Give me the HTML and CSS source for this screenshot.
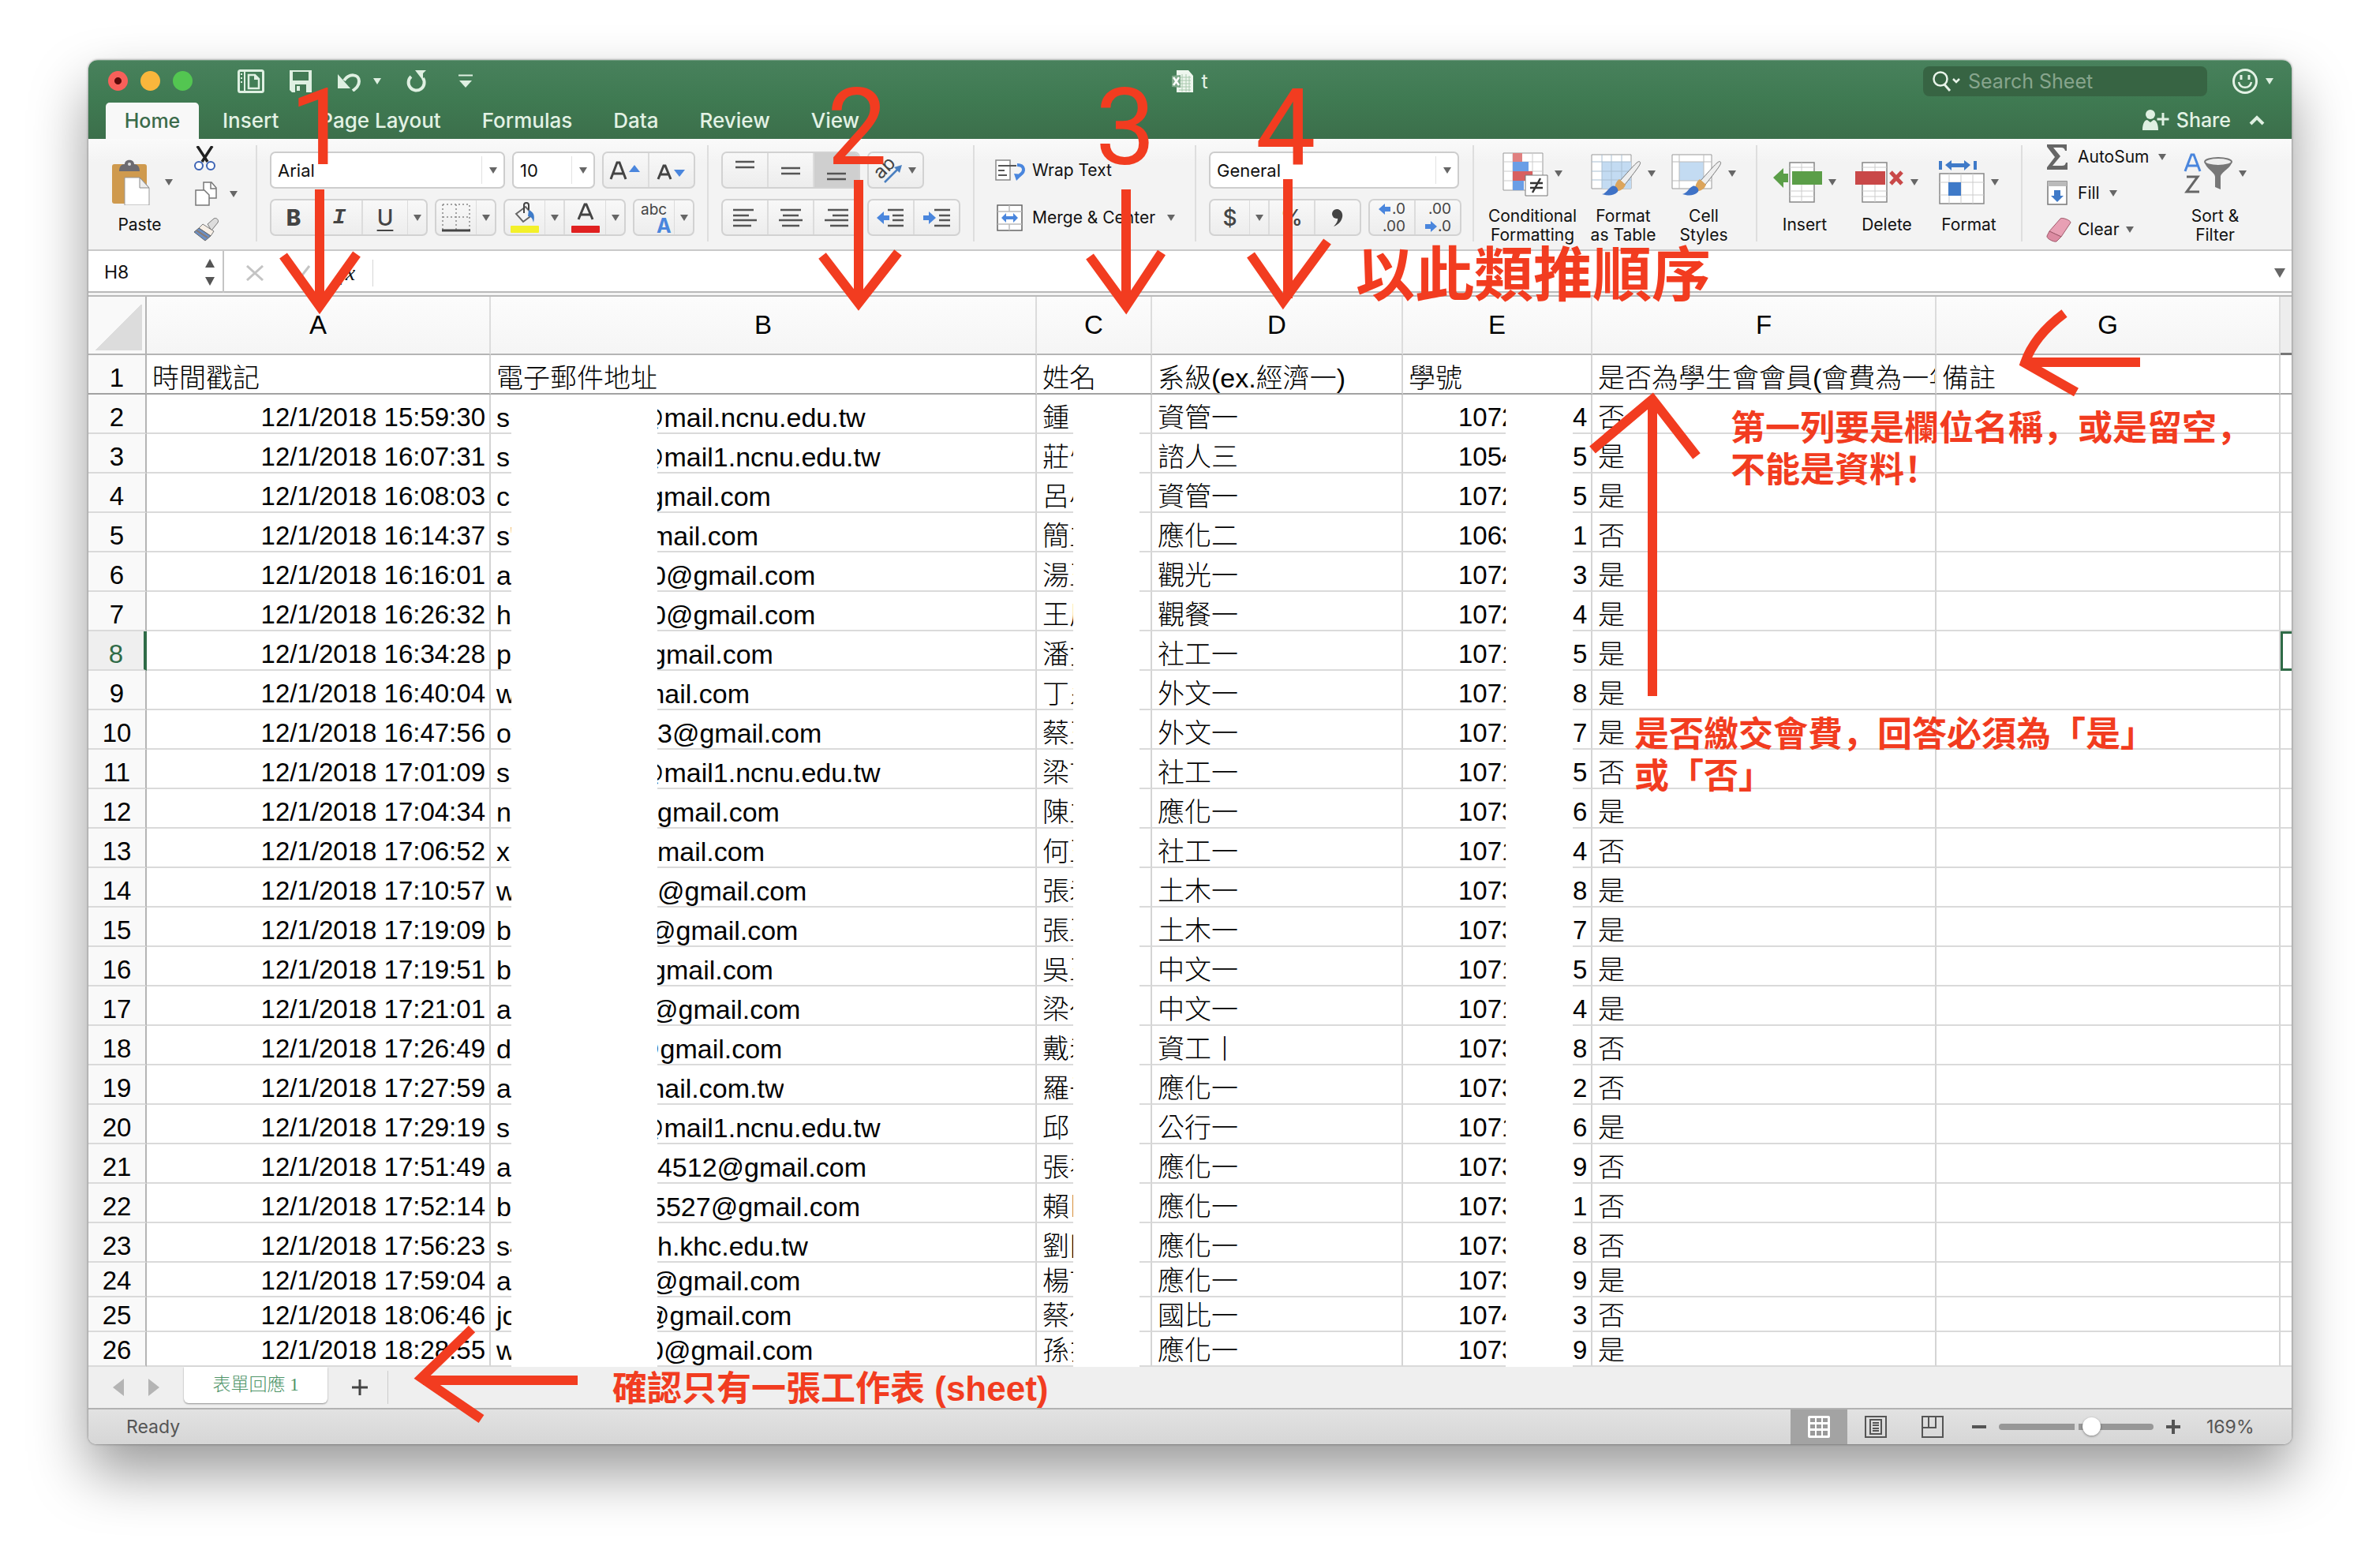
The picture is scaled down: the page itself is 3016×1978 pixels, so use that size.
FILE: index.html
```html
<!DOCTYPE html>
<html lang="zh-Hant">
<head>
<meta charset="utf-8">
<title>t</title>
<link rel="stylesheet" href="styles.css">
</head>
<body>
<main class="window">
  <header class="titlebar">
    <div class="title-row">
      <div class="lights">
        <button class="light light-close" aria-label="Close"></button>
        <button class="light light-min" aria-label="Minimize"></button>
        <button class="light light-max" aria-label="Zoom"></button>
      </div>
      <div class="quick">
        <button class="plain" aria-label="Gallery"><svg width="34" height="30" viewBox="0 0 34 30"><rect x="1.500" y="1.500" width="31" height="27" rx="2" fill="none" stroke="#dff0e2" stroke-width="3"/><path d="M9 2v26" stroke="#dff0e2" stroke-width="2"/><path d="M4 6h2M4 11h2M4 16h2" stroke="#dff0e2" stroke-width="2"/><path d="M14 7h8l5 5v12H14z" fill="none" stroke="#dff0e2" stroke-width="2.500"/><path d="M21 6v7h7z" fill="#dff0e2"/></svg></button>
        <button class="plain" aria-label="Save"><svg width="30" height="30" viewBox="0 0 30 30"><path d="M1 1h28v28H4l-3-3z" fill="#dff0e2"/><path d="M5 3h20v11H5z" fill="#437a55"/><path d="M8 19h14v10H8z" fill="#437a55"/><path d="M10 21h4v6h-4z" fill="#dff0e2"/></svg></button>
        <button class="plain undo" aria-label="Undo"><svg width="32" height="26" viewBox="0 0 32 26"><path d="M1 4v18h16z" fill="#dff0e2"/><path d="M9 12C15 3 28 3 28 13c0 6-4 9-8 12" fill="none" stroke="#dff0e2" stroke-width="4"/></svg><i class="caret caret-light"></i></button>
        <button class="plain" aria-label="Redo"><svg width="28" height="30" viewBox="0 0 28 30"><path d="M7 9a10 10 0 1 0 15 2" fill="none" stroke="#dff0e2" stroke-width="4"/><path d="M12 1h14l-4 4v9z" fill="#dff0e2"/></svg></button>
        <button class="plain" aria-label="Customize toolbar"><svg width="18" height="18" viewBox="0 0 18 18"><path d="M0 1.500h18" stroke="#dff0e2" stroke-width="2"/><path d="M1 8h16l-8 9z" fill="#dff0e2"/></svg></button>
      </div>
      <div class="doc"><svg width="27" height="30" viewBox="0 0 27 30"><path d="M6 1h15l6 7v21H6z" fill="#eef6ee"/><path d="M9 10h15M9 14h15M9 18h15M9 22h15M9 26h15M13 6v22M18 6v22M22 8v20" stroke="#a9c9ae" stroke-width="1"/><path d="M0 8l11-1v16L0 22z" fill="#7fa98a"/><path d="M2 10l7 10M9 10L2 20" stroke="#fff" stroke-width="2.500"/></svg><span>t</span></div>
      <div class="title-right">
        <label class="search"><svg width="36" height="32" viewBox="0 0 36 32"><circle cx="10" cy="13" r="8.500" fill="none" stroke="#e8f3e9" stroke-width="2.500"/><path d="M15 20l7 8" stroke="#e8f3e9" stroke-width="3"/><path d="M26 13l4 4 4-4" fill="none" stroke="#e8f3e9" stroke-width="2.500"/></svg><input type="search" placeholder="Search Sheet" aria-label="Search Sheet"></label>
        <button class="plain smile" aria-label="Feedback"><svg width="34" height="34" viewBox="0 0 34 34"><circle cx="17" cy="17" r="14.500" fill="none" stroke="#e3f2e5" stroke-width="3"/><path d="M12 9v6M22 9v6" stroke="#e3f2e5" stroke-width="3"/><path d="M9 18c2 9 14 9 16 0" fill="none" stroke="#e3f2e5" stroke-width="2.500"/></svg><i class="caret caret-light"></i></button>
      </div>
    </div>
    <nav class="tabs">
      <button class="tab tab-on">Home</button>
      <button class="tab">Insert</button>
      <button class="tab">Page Layout</button>
      <button class="tab">Formulas</button>
      <button class="tab">Data</button>
      <button class="tab">Review</button>
      <button class="tab">View</button>
      <button class="share"><svg width="34" height="26" viewBox="0 0 34 26"><circle cx="10" cy="6" r="6" fill="#dff0e2"/><path d="M0 26c0-9 3-13 6-13l4 3 4-3c3 0 6 4 6 13z" fill="#dff0e2"/><path d="M26 4v16M18.500 12h15" stroke="#dff0e2" stroke-width="3"/></svg>Share</button>
      <button class="plain collapse" aria-label="Collapse ribbon"><svg width="20" height="14" viewBox="0 0 20 14"><path d="M2 12l8-8 8 8" fill="none" stroke="#dff0e2" stroke-width="4"/></svg></button>
    </nav>
  </header>

  <section class="ribbon">
    <div class="group clip">
      <button class="big paste"><span class="pic"><svg width="48" height="58" viewBox="0 0 48 58"><rect x="0" y="6" width="44" height="50" rx="3" fill="#cf9a4e"/><path d="M9 15c0-6 3-9 7-9 0-7 12-7 12 0 4 0 7 3 7 9z" fill="#6c6a70"/><circle cx="22" cy="6" r="2" fill="#ddd"/><path d="M16 23h19l12 13v22H16z" fill="#fff" stroke="#999"/><path d="M35 23v13h12z" fill="#eee" stroke="#888"/></svg><i class="caret"></i></span>Paste</button>
      <div class="stack">
        <button class="plain" aria-label="Cut"><svg width="30" height="31" viewBox="0 0 30 31"><path d="M5 0l13 20M24 0L11 20" stroke="#222" stroke-width="3.500"/><circle cx="7" cy="25" r="5" fill="#fff" stroke="#3c63b4" stroke-width="2"/><circle cx="22" cy="25" r="5" fill="#fff" stroke="#3c63b4" stroke-width="2"/></svg></button>
        <button class="plain copy" aria-label="Copy"><svg width="28" height="31" viewBox="0 0 28 31"><path d="M11 1h10l6 7v13H11z" fill="#fff" stroke="#777" stroke-width="1.500"/><path d="M20 1v8h7" fill="none" stroke="#777" stroke-width="1.500"/><path d="M1 11h11l6 6v13H1z" fill="#fff" stroke="#777" stroke-width="1.500"/></svg><i class="caret"></i></button>
        <button class="plain" aria-label="Format painter"><svg width="34" height="30" viewBox="0 0 34 30"><path d="M18 8l8-7c3-2 7 2 5 5l-8 10z" fill="#ddd" stroke="#777"/><path d="M12 8l14 9-4 6L7 13z" fill="#f7efe6" stroke="#777"/><path d="M7 13l15 10-7 6L1 18z" fill="#6b8fc4" stroke="#666"/><path d="M4 16l14 9" stroke="#8a7a70" stroke-width="2"/></svg></button>
      </div>
    </div>

    <div class="group controls font">
      <div class="line">
        <div class="combo w-font"><select aria-label="Font"><option>Arial</option></select><i class="caret"></i></div>
        <div class="combo w-size"><select aria-label="Font size"><option>10</option></select><i class="caret"></i></div>
        <div class="seg"><button class="cell" aria-label="Increase font size"><svg width="42" height="26" viewBox="0 0 42 26"><path d="M2 24L10 3h3l8 21M5 17h13" fill="none" stroke="#444" stroke-width="3"/><path d="M25 15h14l-7-9z" fill="#4a86dd"/></svg></button><button class="cell" aria-label="Decrease font size"><svg width="42" height="26" viewBox="0 0 42 26"><path d="M4 24l7-17h2l7 17M7 18h10" fill="none" stroke="#444" stroke-width="3"/><path d="M24 12h14l-7 9z" fill="#4a86dd"/></svg></button></div>
      </div>
      <div class="line">
        <div class="seg"><button class="cell ico bold">B</button><button class="cell ico ital">I</button><button class="cell ico under">U</button><button class="drop" aria-label="Underline options"><i class="caret"></i></button></div>
        <div class="seg"><button class="cell narrow" aria-label="Borders"><svg width="36" height="36" viewBox="0 0 36 36"><path d="M1 1h34v32M1 1v32M18 1v32M1 17h34" fill="none" stroke="#888" stroke-width="1.500" stroke-dasharray="2 3"/><path d="M0 34h36" stroke="#444" stroke-width="3"/></svg></button><button class="drop" aria-label="Border options"><i class="caret"></i></button></div>
        <div class="seg"><button class="cell narrow" aria-label="Fill color"><svg width="38" height="40" viewBox="0 0 38 40"><path d="M8 15l12-9 9 10-12 9z" fill="#f4f4f4" stroke="#666" stroke-width="2"/><path d="M18 14V4c0-4 6-4 6 0v6" fill="none" stroke="#444" stroke-width="2"/><path d="M24 10c7 3 8 8 6 16-1-5-3-8-7-8z" fill="#3e7bc9"/><rect x="1" y="30" width="36" height="9" rx="1" fill="#f3f02a"/></svg></button><button class="drop" aria-label="Fill options"><i class="caret"></i></button><button class="cell narrow" aria-label="Font color"><svg width="38" height="40" viewBox="0 0 38 40"><path d="M10 22L18 3h2l8 19M13 16h12" fill="none" stroke="#444" stroke-width="3"/><rect x="1" y="30" width="36" height="9" rx="1" fill="#e02020"/></svg></button><button class="drop" aria-label="Font color options"><i class="caret"></i></button></div>
        <div class="seg"><button class="cell narrow abc" aria-label="Phonetic guide"><span>abc</span><b>A</b></button><button class="drop" aria-label="Phonetic options"><i class="caret"></i></button></div>
      </div>
    </div>

    <div class="group controls align">
      <div class="line">
        <div class="seg"><button class="cell" aria-label="Align top"><svg width="30" height="30" viewBox="0 0 30 30"><path d="M3 4h24M3 11h24" stroke="#555" stroke-width="2.500"/></svg></button><button class="cell" aria-label="Align middle"><svg width="30" height="30" viewBox="0 0 30 30"><path d="M3 12h24M3 19h24" stroke="#555" stroke-width="2.500"/></svg></button><button class="cell pressed" aria-label="Align bottom"><svg width="30" height="30" viewBox="0 0 30 30"><path d="M3 19h24M3 26h24" stroke="#555" stroke-width="2.500"/></svg></button></div>
        <div class="seg"><button class="cell orient" aria-label="Orientation"><svg width="36" height="34" viewBox="0 0 36 34"><text x="4" y="27" transform="rotate(-45 8 24)" class="svg-ab">ab</text><path d="M12 32L31 13" stroke="#4a7fc0" stroke-width="2.500"/><path d="M34 10l-3 10-7-7z" fill="#4a7fc0"/></svg><i class="caret"></i></button></div>
      </div>
      <div class="line">
        <div class="seg"><button class="cell" aria-label="Align left"><svg width="30" height="24" viewBox="0 0 30 24"><path d="M0 2h26M0 9h20M0 15h30M0 22h23" stroke="#555" stroke-width="2.500"/></svg></button><button class="cell" aria-label="Center"><svg width="30" height="24" viewBox="0 0 30 24"><path d="M2 2h26M5 9h20M0 15h30M4 22h22" stroke="#555" stroke-width="2.500"/></svg></button><button class="cell" aria-label="Align right"><svg width="30" height="24" viewBox="0 0 30 24"><path d="M4 2h26M10 9h20M0 15h30M7 22h23" stroke="#555" stroke-width="2.500"/></svg></button></div>
        <div class="seg"><button class="cell" aria-label="Decrease indent"><svg width="36" height="24" viewBox="0 0 36 24"><path d="M14 2h20M20 9h14M20 15h14M14 22h20" stroke="#555" stroke-width="2.500"/><path d="M0 12l9-8v5h7v6H9v5z" fill="#4a86dd"/></svg></button><button class="cell" aria-label="Increase indent"><svg width="36" height="24" viewBox="0 0 36 24"><path d="M15 2h20M21 9h14M21 15h14M15 22h20" stroke="#555" stroke-width="2.500"/><path d="M17 12L8 4v5H1v6h7v5z" fill="#4a86dd"/></svg></button></div>
      </div>
    </div>

    <div class="group controls wrap">
      <button class="text-btn"><svg width="40" height="28" viewBox="0 0 40 28"><path d="M1 1h18v25H1z" fill="#fff" stroke="#888" stroke-width="1.500"/><path d="M4 8h23M4 14h8M4 20h11" stroke="#555" stroke-width="2"/><path d="M28 7c9 0 11 8 3 13" fill="none" stroke="#4a86dd" stroke-width="4"/><path d="M24 18l11 1-8 8z" fill="#4a86dd"/></svg>Wrap Text</button>
      <button class="text-btn"><svg width="40" height="34" viewBox="0 0 40 34"><path d="M3 1h31v32H3z" fill="#fff" stroke="#666" stroke-width="1.500"/><path d="M3 9h31M3 25h31M18 1v8M18 25v8" stroke="#bbb" stroke-width="1.500"/><path d="M8 17l6-6v4h9v-4l6 6-6 6v-4h-9v4z" fill="#4a86dd"/></svg>Merge &amp; Center<i class="caret"></i></button>
    </div>

    <div class="group controls number">
      <div class="line"><div class="combo w-num"><select aria-label="Number format"><option>General</option></select><i class="caret"></i></div></div>
      <div class="line">
        <div class="seg"><button class="cell ico slim">$</button><button class="drop" aria-label="Currency options"><i class="caret"></i></button><button class="cell ico">%</button><button class="cell" aria-label="Comma style"><svg width="18" height="26" viewBox="0 0 18 26"><circle cx="8" cy="8" r="6" fill="#444"/><path d="M8 2c12 2 8 18-4 22 6-6 6-10 4-14z" fill="#444"/></svg></button></div>
        <div class="seg"><button class="cell dec" aria-label="Increase decimal"><span><svg width="16" height="14" viewBox="0 0 16 14"><path d="M0 7l8-7v4h7v6H8v4z" fill="#4a86dd"/></svg>.0</span><span>.00</span></button><button class="cell dec" aria-label="Decrease decimal"><span>.00</span><span><svg width="16" height="14" viewBox="0 0 16 14"><path d="M16 7L8 0v4H1v6h7v4z" fill="#4a86dd"/></svg>.0</span></button></div>
      </div>
    </div>

    <div class="group bigs styles">
      <button class="big w-cond"><span class="pic"><svg width="58" height="58" viewBox="0 0 58 58"><path d="M1 3h50v47H1z" fill="#fff" stroke="#999"/><path d="M13 3v47M38 3v47M1 14h50M1 26h50M1 38h50" stroke="#ccc"/><path d="M13 3h12v11H13z" fill="#e08080"/><path d="M13 14h20v12H13z" fill="#6a9ee6"/><path d="M13 26h25v12H13z" fill="#d86060"/><path d="M13 38h14v12H13z" fill="#6a9ee6"/><path d="M29 31h28v26H29z" fill="#fff" stroke="#777"/><path d="M35 41h16M35 47h16M48 35L38 53" stroke="#333" stroke-width="2.500"/></svg><i class="caret"></i></span>Conditional<br>Formatting</button>
      <button class="big w-fmt"><span class="pic"><svg width="64" height="58" viewBox="0 0 64 58"><path d="M1 5h50v43H1z" fill="#fff" stroke="#999"/><path d="M14 14h37v34H14z" fill="#c3dbf2"/><path d="M14 5v43M26 5v43M39 5v43M1 14h50M1 26h50M1 37h50" stroke="#a9bfd2"/><path d="M62 14c2 2 0 5-19 29l-6-5C55 18 60 12 62 14z" fill="#eee" stroke="#777"/><path d="M36 36l8 7c-2 6-8 9-14 8 0-8 2-12 6-15z" fill="#dca55c"/><path d="M27 45c3-2 9 3 7 7-6 6-14 5-20 3 6-1 8-8 13-10z" fill="#3f72c6"/></svg><i class="caret"></i></span>Format<br>as Table</button>
      <button class="big w-cell"><span class="pic"><svg width="64" height="58" viewBox="0 0 64 58"><path d="M1 5h50v43H1z" fill="#fff" stroke="#999"/><path d="M10 14h31v24H10z" fill="#c3dbf2"/><path d="M10 5v43M41 5v43M1 14h50M1 38h50" stroke="#bbb"/><path d="M62 14c2 2 0 5-19 29l-6-5C55 18 60 12 62 14z" fill="#eee" stroke="#777"/><path d="M36 36l8 7c-2 6-8 9-14 8 0-8 2-12 6-15z" fill="#dca55c"/><path d="M27 45c3-2 9 3 7 7-6 6-14 5-20 3 6-1 8-8 13-10z" fill="#3f72c6"/></svg><i class="caret"></i></span>Cell<br>Styles</button>
    </div>

    <div class="group bigs cells">
      <button class="big w-cell"><span class="pic"><svg width="62" height="54" viewBox="0 0 62 54"><path d="M21 2h31v50H21z" fill="#fff" stroke="#888" stroke-width="1.500"/><path d="M36 2v50M21 8h31M21 38h31M21 45h31" stroke="#ccc"/><path d="M24 13h38v17H24z" fill="#5b9e48"/><path d="M0 21L13 9v7h6v11h-6v7z" fill="#5b9e48"/></svg><i class="caret"></i></span>Insert</button>
      <button class="big w-cell"><span class="pic"><svg width="62" height="54" viewBox="0 0 62 54"><path d="M9 2h31v50H9z" fill="#fff" stroke="#888" stroke-width="1.500"/><path d="M25 2v50M9 8h31M9 38h31M9 45h31" stroke="#ccc"/><path d="M0 13h38v17H0z" fill="#c94848"/><path d="M45 14l14 15M59 14L45 29" stroke="#c94848" stroke-width="5"/></svg><i class="caret"></i></span>Delete</button>
      <button class="big w-cell"><span class="pic"><svg width="58" height="58" viewBox="0 0 58 58"><path d="M1 18h56v38H1z" fill="#fff" stroke="#888" stroke-width="1.500"/><path d="M13 18v38M28 18v38M43 18v38M1 29h56M1 45h56" stroke="#ccc"/><path d="M12 29h16v17H12z" fill="#3f7ac8"/><path d="M2 2v11M46 2v11" stroke="#3f7ac8" stroke-width="4"/><path d="M8 7l8-6v4h16V1l8 6-8 7v-4H16v4z" fill="#3f7ac8"/></svg><i class="caret"></i></span>Format</button>
    </div>

    <div class="group edit">
      <div class="stack wide">
        <button class="text-btn"><svg width="28" height="32" viewBox="0 0 28 32"><path d="M1 0h25v8h-2c-1-3-2-4-5-4H9l9 11L8 27h12c3 0 4-1 5-4h2v9H1v-3l10-13L1 3z" fill="#666"/></svg>AutoSum<i class="caret"></i></button>
        <button class="text-btn"><svg width="28" height="32" viewBox="0 0 28 32"><path d="M2 1h24v29H2z" fill="#fff" stroke="#777" stroke-width="1.500"/><path d="M2 1h24v6H2z" fill="#bbb"/><path d="M10 12h8v7h4l-8 8-8-8h4z" fill="#3f7ac8"/></svg>Fill<i class="caret"></i></button>
        <button class="text-btn"><svg width="32" height="32" viewBox="0 0 32 32"><path d="M18 2c2-2 13 2 13 5L19 25 4 18z" fill="#e8a0b4" stroke="#a05a6c"/><path d="M4 18l15 7-6 6C9 32 0 27 1 24z" fill="#dc8ba2" stroke="#a05a6c"/></svg>Clear<i class="caret"></i></button>
      </div>
      <button class="big w-cell"><span class="pic"><svg width="62" height="52" viewBox="0 0 62 52"><path d="M2 23L10 2h3l8 21M5 16h13" fill="none" stroke="#4a86dd" stroke-width="3"/><path d="M4 30h14L4 49h16" fill="none" stroke="#666" stroke-width="3"/><path d="M27 11c0 8 13 13 13 19v13l7 3V30c0-6 14-11 14-19z" fill="#777"/><ellipse cx="44" cy="11" rx="17" ry="5" fill="#eee" stroke="#777" stroke-width="2"/></svg><i class="caret"></i></span>Sort &amp;<br>Filter</button>
    </div>
  </section>

  <section class="formula">
    <label class="namebox"><input value="H8" aria-label="Name box"><svg width="14" height="34" viewBox="0 0 14 34"><path d="M1 11h12L7 0zM1 23h12L7 34z" fill="#555"/></svg></label>
    <button class="plain" aria-label="Cancel"><svg width="22" height="20" viewBox="0 0 22 20"><path d="M1 1l20 18M21 1L1 19" stroke="#c4c4c4" stroke-width="3"/></svg></button>
    <button class="plain" aria-label="Enter"><svg width="24" height="22" viewBox="0 0 24 22"><path d="M2 13l6 7L22 2" fill="none" stroke="#c4c4c4" stroke-width="3"/></svg></button>
    <button class="plain fx">fx</button>
    <input class="fx-input" aria-label="Formula">
    <button class="plain" aria-label="Expand formula bar"><i class="caret caret-big"></i></button>
  </section>

  <table class="sheet">
    <colgroup><col class="c-n"><col class="c-w"><col class="c-b"><col class="c-c"><col class="c-d"><col class="c-e"><col class="c-w"><col class="c-w"><col></colgroup>
    <thead><tr><th class="corner"></th><th>A</th><th>B</th><th>C</th><th>D</th><th>E</th><th>F</th><th>G</th><th class="col-on"></th></tr></thead>
    <tbody>
      <tr class="heads"><th>1</th><td>時間戳記</td><td>電子郵件地址</td><td>姓名</td><td>系級(ex.經濟一)</td><td>學號</td><td>是否為學生會會員(會費為一年)</td><td>備註</td><td></td></tr>
      <tr><th>2</th><td>12/1/2018 15:59:30</td><td><div><span>s</span><i></i><span class="k4">@mail.ncnu.edu.tw</span></div></td><td><div><span>鍾</span><i></i></div></td><td>資管一</td><td><div><span>1072</span><i></i><span>4</span></div></td><td>否</td><td></td><td></td></tr>
      <tr><th>3</th><td>12/1/2018 16:07:31</td><td><div><span>s</span><i></i><span class="k4">@mail1.ncnu.edu.tw</span></div></td><td><div><span>莊忄</span><i></i></div></td><td>諮人三</td><td><div><span>1054</span><i></i><span>5</span></div></td><td>是</td><td></td><td></td></tr>
      <tr><th>4</th><td>12/1/2018 16:08:03</td><td><div><span>c</span><i></i><span class="k2">gmail.com</span></div></td><td><div><span>呂小</span><i></i></div></td><td>資管一</td><td><div><span>1072</span><i></i><span>5</span></div></td><td>是</td><td></td><td></td></tr>
      <tr><th>5</th><td>12/1/2018 16:14:37</td><td><div><span>s'</span><i></i><span class="k1">mail.com</span></div></td><td><div><span>簡立</span><i></i></div></td><td>應化二</td><td><div><span>1063</span><i></i><span>1</span></div></td><td>否</td><td></td><td></td></tr>
      <tr><th>6</th><td>12/1/2018 16:16:01</td><td><div><span>a</span><i></i><span class="k1">0@gmail.com</span></div></td><td><div><span>湯王</span><i></i></div></td><td>觀光一</td><td><div><span>1072</span><i></i><span>3</span></div></td><td>是</td><td></td><td></td></tr>
      <tr><th>7</th><td>12/1/2018 16:26:32</td><td><div><span>h.</span><i></i><span class="k1">0@gmail.com</span></div></td><td><div><span>王厂</span><i></i></div></td><td>觀餐一</td><td><div><span>1072</span><i></i><span>4</span></div></td><td>是</td><td></td><td></td></tr>
      <tr class="row-on"><th>8</th><td>12/1/2018 16:34:28</td><td><div><span>pa</span><i></i><span class="k1">gmail.com</span></div></td><td><div><span>潘女</span><i></i></div></td><td>社工一</td><td><div><span>1071</span><i></i><span>5</span></div></td><td>是</td><td></td><td class="picked"></td></tr>
      <tr><th>9</th><td>12/1/2018 16:40:04</td><td><div><span>w</span><i></i><span class="k3">mail.com</span></div></td><td><div><span>丁糸</span><i></i></div></td><td>外文一</td><td><div><span>1071</span><i></i><span>8</span></div></td><td>是</td><td></td><td></td></tr>
      <tr><th>10</th><td>12/1/2018 16:47:56</td><td><div><span>ov</span><i></i><span>3@gmail.com</span></div></td><td><div><span>蔡王</span><i></i></div></td><td>外文一</td><td><div><span>1071</span><i></i><span>7</span></div></td><td>是</td><td></td><td></td></tr>
      <tr><th>11</th><td>12/1/2018 17:01:09</td><td><div><span>s</span><i></i><span class="k4">@mail1.ncnu.edu.tw</span></div></td><td><div><span>梁言</span><i></i></div></td><td>社工一</td><td><div><span>1071</span><i></i><span>5</span></div></td><td>否</td><td></td><td></td></tr>
      <tr><th>12</th><td>12/1/2018 17:04:34</td><td><div><span>n</span><i></i><span>gmail.com</span></div></td><td><div><span>陳立</span><i></i></div></td><td>應化一</td><td><div><span>1073</span><i></i><span>6</span></div></td><td>是</td><td></td><td></td></tr>
      <tr><th>13</th><td>12/1/2018 17:06:52</td><td><div><span>x</span><i></i><span>mail.com</span></div></td><td><div><span>何王</span><i></i></div></td><td>社工一</td><td><div><span>1071</span><i></i><span>4</span></div></td><td>否</td><td></td><td></td></tr>
      <tr><th>14</th><td>12/1/2018 17:10:57</td><td><div><span>w</span><i></i><span>@gmail.com</span></div></td><td><div><span>張禾</span><i></i></div></td><td>土木一</td><td><div><span>1073</span><i></i><span>8</span></div></td><td>是</td><td></td><td></td></tr>
      <tr><th>15</th><td>12/1/2018 17:19:09</td><td><div><span>b</span><i></i><span class="k2">@gmail.com</span></div></td><td><div><span>張王</span><i></i></div></td><td>土木一</td><td><div><span>1073</span><i></i><span>7</span></div></td><td>是</td><td></td><td></td></tr>
      <tr><th>16</th><td>12/1/2018 17:19:51</td><td><div><span>ba</span><i></i><span class="k1">gmail.com</span></div></td><td><div><span>吳王</span><i></i></div></td><td>中文一</td><td><div><span>1071</span><i></i><span>5</span></div></td><td>是</td><td></td><td></td></tr>
      <tr><th>17</th><td>12/1/2018 17:21:01</td><td><div><span>au</span><i></i><span class="k1">@gmail.com</span></div></td><td><div><span>梁亻</span><i></i></div></td><td>中文一</td><td><div><span>1071</span><i></i><span>4</span></div></td><td>是</td><td></td><td></td></tr>
      <tr><th>18</th><td>12/1/2018 17:26:49</td><td><div><span>de</span><i></i><span class="k5">@gmail.com</span></div></td><td><div><span>戴禾</span><i></i></div></td><td>資工丨</td><td><div><span>1073</span><i></i><span>8</span></div></td><td>否</td><td></td><td></td></tr>
      <tr><th>19</th><td>12/1/2018 17:27:59</td><td><div><span>a</span><i></i><span class="k3">mail.com.tw</span></div></td><td><div><span>羅子</span><i></i></div></td><td>應化一</td><td><div><span>1073</span><i></i><span>2</span></div></td><td>否</td><td></td><td></td></tr>
      <tr><th>20</th><td>12/1/2018 17:29:19</td><td><div><span>s</span><i></i><span class="k4">@mail1.ncnu.edu.tw</span></div></td><td><div><span>邱日</span><i></i></div></td><td>公行一</td><td><div><span>1071</span><i></i><span>6</span></div></td><td>是</td><td></td><td></td></tr>
      <tr><th>21</th><td>12/1/2018 17:51:49</td><td><div><span>as</span><i></i><span class="k3">04512@gmail.com</span></div></td><td><div><span>張衤</span><i></i></div></td><td>應化一</td><td><div><span>1073</span><i></i><span>9</span></div></td><td>否</td><td></td><td></td></tr>
      <tr><th>22</th><td>12/1/2018 17:52:14</td><td><div><span>be</span><i></i><span class="k1">5527@gmail.com</span></div></td><td><div><span>賴臣</span><i></i></div></td><td>應化一</td><td><div><span>1073</span><i></i><span>1</span></div></td><td>否</td><td></td><td></td></tr>
      <tr><th>23</th><td>12/1/2018 17:56:23</td><td><div><span>s4</span><i></i><span>h.khc.edu.tw</span></div></td><td><div><span>劉冂</span><i></i></div></td><td>應化一</td><td><div><span>1073</span><i></i><span>8</span></div></td><td>否</td><td></td><td></td></tr>
      <tr class="short"><th>24</th><td>12/1/2018 17:59:04</td><td><div><span>as</span><i></i><span class="k1">@gmail.com</span></div></td><td><div><span>楊言</span><i></i></div></td><td>應化一</td><td><div><span>1073</span><i></i><span>9</span></div></td><td>是</td><td></td><td></td></tr>
      <tr class="short"><th>25</th><td>12/1/2018 18:06:46</td><td><div><span>jo</span><i></i><span class="k3">@gmail.com</span></div></td><td><div><span>蔡亻</span><i></i></div></td><td>國比一</td><td><div><span>1074</span><i></i><span>3</span></div></td><td>否</td><td></td><td></td></tr>
      <tr class="short"><th>26</th><td>12/1/2018 18:28:55</td><td><div><span>w</span><i></i><span class="k2">0@gmail.com</span></div></td><td><div><span>孫扌</span><i></i></div></td><td>應化一</td><td><div><span>1073</span><i></i><span>9</span></div></td><td>是</td><td></td><td></td></tr>
    </tbody>
  </table>

  <nav class="sheets">
    <button class="plain" aria-label="Previous sheet"><svg width="14" height="22" viewBox="0 0 14 22"><path d="M14 0v22L0 11z" fill="#b4b4b4"/></svg></button>
    <button class="plain" aria-label="Next sheet"><svg width="14" height="22" viewBox="0 0 14 22"><path d="M0 0v22l14-11z" fill="#b4b4b4"/></svg></button>
    <button class="sheet-tab">表單回應 1</button>
    <button class="plain add" aria-label="Add sheet"><svg width="20" height="20" viewBox="0 0 20 20"><path d="M10 0v20M0 10h20" stroke="#444" stroke-width="3"/></svg></button>
  </nav>

  <footer class="status">
    <span class="ready">Ready</span>
    <button class="view view-on" aria-label="Normal view"><svg width="28" height="28" viewBox="0 0 28 28"><rect width="28" height="28" rx="2" fill="#fff"/><path d="M3 3h6v5H3zM11 3h6v5h-6zM19 3h6v5h-6zM3 11h6v5H3zM11 11h6v5h-6zM19 11h6v5h-6zM3 19h6v6H3zM11 19h6v6h-6zM19 19h6v6h-6z" fill="#999"/></svg></button>
    <button class="view" aria-label="Page layout view"><svg width="28" height="28" viewBox="0 0 28 28"><path d="M1 1h26v26H1zM7 5h14v18H7zM10 9h8M10 12h8M10 16h8M10 19h8" fill="none" stroke="#555" stroke-width="2"/></svg></button>
    <button class="view" aria-label="Page break view"><svg width="28" height="28" viewBox="0 0 28 28"><path d="M1 1h26v26H1zM9 1v14M18 1v14H1" fill="none" stroke="#555" stroke-width="2"/></svg></button>
    <button class="plain zoom-out" aria-label="Zoom out"><svg width="18" height="18" viewBox="0 0 18 18"><path d="M0 9h18" stroke="#555" stroke-width="4"/></svg></button>
    <input class="zoom" type="range" min="0" max="100" value="61" aria-label="Zoom">
    <button class="plain" aria-label="Zoom in"><svg width="18" height="18" viewBox="0 0 18 18"><path d="M9 0v18M0 9h18" stroke="#555" stroke-width="4"/></svg></button>
    <span class="percent">169%</span>
  </footer>
</main>

<aside class="notes">
  <svg class="arrows" viewBox="0 0 3016 1978" width="3016" height="1978">
    <path d="M405 240V390M359 324L405 388L452 322"/>
    <path d="M1088 228V382M1042 324L1088 384L1138 320"/>
    <path d="M1427 240V390M1381 325L1427 388L1472 320"/>
    <path d="M1632 227V378M1585 323L1626 382L1682 306"/>
    <path d="M2712 459H2568M2616 397C2592 415 2574 436 2566 460L2631 497"/>
    <path d="M2094 882V508M2018 570L2094 506L2150 578"/>
    <path d="M732 1749H536M598 1684L534 1746L610 1798"/>
  </svg>
  <span class="note digit d1">1</span>
  <span class="note digit d2">2</span>
  <span class="note digit d3">3</span>
  <span class="note digit d4">4</span>
  <p class="note order">以此類推順序</p>
  <p class="note first-row" lang="zh-Hans">第一列要是欄位名稱，或是留空，<br>不能是資料！</p>
  <p class="note paid" lang="zh-Hans">是否繳交會費，回答必須為「是」<br>或「否」</p>
  <p class="note one-sheet">確認只有一張工作表 (sheet)</p>
</aside>
</body>
</html>
```
FILE: styles.css
```css
* { box-sizing: border-box; }

body {
  margin: 0;
  position: relative;
  padding: 76px 112px 148px;
  background: #fff;
  color: #111;
  font-family: Inter, "Noto Sans CJK TC", sans-serif;
  font-size: 21px;
  line-height: 24px;
}

button, input, select {
  font: inherit;
  color: inherit;
  margin: 0;
  padding: 0;
  border: 0;
  background: none;
  appearance: none;
  outline: 0;
  border-radius: 0;
}

svg { display: block; flex: none; }

.window {
  border-radius: 12px 12px 10px 10px;
  box-shadow: 0 36px 72px rgba(0, 0, 0, .4), 0 0 3px rgba(0, 0, 0, .5);
  overflow: hidden;
  background: #fff;
}

.plain { display: flex; align-items: center; }

.caret {
  flex: none;
  border: 5px solid transparent;
  border-top: 8px solid #666;
  border-bottom: 0;
}
.caret-light { border-top-color: #dff0e2; }
.caret-big { border-width: 12px 7px 0; }

/* title bar */
.titlebar {
  background: linear-gradient(#48815c, #3f7a52 50%, #3c6f4b);
  color: #e3f2e5;
  border-top: 1px solid #6d9a7c;
}
.title-row {
  height: 51px;
  display: grid;
  grid-template-columns: 1fr auto 1fr;
  align-items: center;
  position: relative;
}
.lights {
  display: flex;
  gap: 16px;
  padding-left: 25px;
  grid-area: 1 / 1;
}
.light { width: 25px; height: 25px; border-radius: 50%; }
.light-close { background: radial-gradient(#5c0a0a 4px, #f8605a 5px); }
.light-min { background: #f9b63c; }
.light-max { background: #53c651; }
.quick {
  grid-area: 1 / 1;
  display: flex;
  align-items: center;
  gap: 31px;
  padding-left: 189px;
}
.undo { gap: 14px; }
.quick .plain:nth-child(4) { margin-right: 8px; }
.doc { display: flex; align-items: center; gap: 10px; font-size: 25px; }
.title-right {
  display: flex;
  align-items: center;
  justify-content: flex-end;
  gap: 31px;
  padding-right: 23px;
}
.search {
  display: flex;
  align-items: center;
  gap: 9px;
  width: 360px;
  height: 38px;
  padding-left: 12px;
  border-radius: 8px;
  background: #376443;
}
.search input { flex: 1; min-width: 0; font-size: 25px; }
.search input::placeholder { color: #87a58d; opacity: 1; }
.smile { gap: 9px; }

.tabs {
  display: flex;
  align-items: center;
  height: 48px;
  padding: 0 34px 0 22px;
  font-size: 25px;
  font-weight: 500;
}
.tab { height: 46px; padding: 0 26px; align-self: flex-end; white-space: nowrap; font-size: 26px; }
.tab-on {
  width: 118px;
  padding: 0;
  margin-right: 4px;
  border-radius: 5px 5px 0 0;
  background: #f8f8f8;
  color: #3b6b4b;
  font-size: 25px;
}
.share { display: flex; align-items: center; gap: 9px; margin-left: auto; }
.collapse { margin-left: 23px; }

/* ribbon */
.ribbon {
  display: flex;
  height: 142px;
  background: linear-gradient(#fafafa, #f3f3f3 30px);
  border-bottom: 2px solid #c9c9c9;
}
.group { position: relative; display: flex; flex: none; }
.group:not(:last-child)::after {
  content: "";
  position: absolute;
  right: 0;
  top: 8px;
  bottom: 10px;
  border-right: 2px solid #dedede;
}
.clip { width: 214px; padding-left: 20px; }
.stack { display: flex; flex-direction: column; height: 138px; }
.stack > button { flex: 1; }
.clip .stack { margin-left: 23px; padding-top: 2px; }
.copy { gap: 16px; padding-left: 2px; }

.big { display: block; width: 90px; height: 132px; padding-top: 14px; align-self: flex-start; text-align: center; white-space: nowrap; }
.pic { display: flex; align-items: center; justify-content: center; gap: 10px; height: 60px; margin-bottom: 12px; }
.paste .pic { gap: 19px; padding-left: 7px; }
.w-cond { width: 116px; }
.w-fmt { width: 86px; }
.bigs { gap: 14px; }
.styles { width: 359px; padding-left: 16px; }
.cells { width: 336px; padding-left: 15px; }
.cells .pic, .styles .pic, .edit .pic { gap: 8px; }

.controls { flex-direction: column; gap: 13px; padding: 16px 0 0 16px; }
.line { display: flex; gap: 9px; height: 47px; }
.font { width: 572px; }
.align { width: 337px; }
.wrap { width: 281px; padding-left: 26px; }
.number { width: 352px; }

.combo {
  display: flex;
  align-items: center;
  position: relative;
  border: 2px solid #cdcdcd;
  border-radius: 7px;
  background: #fff;
}
.combo select { width: 100%; height: 100%; padding-left: 8px; font-size: 22px; }
.combo .caret { position: absolute; right: 8px; pointer-events: none; }
.combo::after { content: ""; position: absolute; right: 27px; top: 4px; bottom: 4px; border-right: 1px solid #e2e2e2; pointer-events: none; }
.w-font { width: 298px; }
.w-size { width: 105px; }
.w-num { width: 317px; }

.seg {
  display: flex;
  border: 2px solid #d2d2d2;
  border-radius: 7px;
  background: linear-gradient(#f8f8f8, #ededed);
  overflow: hidden;
}
.cell { width: 58px; display: flex; align-items: center; justify-content: center; color: #444; }
.cell + .cell, .drop + .cell { border-left: 2px solid #dcdcdc; }
.seg > :first-child { width: 56px; }
.seg > .narrow:first-child { width: 50px; }
.narrow { width: 53px; }
.seg > .slim:first-child { width: 49px; }
.drop { width: 24px; display: flex; align-items: center; justify-content: center; border-left: 1px solid #dcdcdc; }
.pressed { background: #cfcfcf; }
.ico { font-size: 28px; font-weight: 500; }
.bold { font-weight: 800; }
.ital { font-family: "Liberation Mono", monospace; font-style: italic; font-weight: 700; }
.under { text-decoration: underline; text-underline-offset: 5px; }
.abc { display: block; font-size: 19px; line-height: 20px; text-align: left; padding-left: 8px; }
.abc span, .abc b { display: block; }
.abc b { padding-left: 20px; color: #4a86dd; font-size: 25px; }
.seg > .orient:first-child { width: 68px; gap: 6px; }
.svg-ab { font-size: 24px; fill: #444; }
.dec { flex-direction: column; align-items: flex-end; padding-right: 11px; font-size: 19px; line-height: 22px; }
.dec span { display: flex; align-items: center; gap: 1px; }

.text-btn { display: flex; align-items: center; gap: 7px; height: 47px; white-space: nowrap; }
.text-btn .caret { margin-left: 8px; }
.edit { gap: 9px; padding-left: 30px; }
.wide { width: 160px; }
.wide .text-btn { height: auto; gap: 12px; }
.wide .text-btn:last-child { gap: 8px; }
.wide .caret { margin-left: 0; }

/* formula bar */
.formula {
  display: flex;
  align-items: center;
  gap: 36px;
  height: 58px;
  padding-right: 8px;
  border-bottom: 2px solid #b9b9b9;
  box-shadow: inset 0 -3px #f4f4f4, inset 0 -5px #b9b9b9;
}
.namebox { display: flex; align-items: center; width: 172px; height: 53px; padding: 0 11px 0 20px; border-right: 2px solid #c4c4c4; align-self: flex-start; margin-right: -8px; }
.namebox input { width: 127px; font-size: 23px; }
.fx { font: italic 28px "Liberation Serif", serif; width: 26px; }
.fx-input { flex: 1; height: 34px; border-left: 1px solid #d5d5d5; margin-left: -20px; }

/* grid */
.sheet {
  width: 100%;
  table-layout: fixed;
  border-collapse: separate;
  border-spacing: 0;
  font-family: "Liberation Sans", "Noto Sans CJK TC", sans-serif;
  font-size: 33px;
  font-weight: 300;
  line-height: 38px;
  color: #000;
}
.c-n { width: 74px; }
.c-w { width: 436px; }
.c-b { width: 692px; }
.c-c { width: 146px; }
.c-d { width: 318px; }
.c-e { width: 240px; }
.sheet th { font-weight: 400; padding: 0; text-align: center; }
.sheet thead th {
  height: 74px;
  border-right: 2px solid #dcdcdc;
  border-bottom: 2px solid #b4b4b4;
  background: linear-gradient(#fcfcfc, #f5f5f5);
}
.sheet thead .corner {
  border-right-color: #b4b4b4;
  background: linear-gradient(135deg, transparent 50%, #dcdcdc 50%) 8px 10px / 60px 58px no-repeat #f9f9f9;
}
.sheet thead .col-on { border-right: 0; border-bottom: 3px solid #777; background: #ededed; }
.sheet tbody { --row: 50px; }
.sheet .short { --row: 44px; }
.sheet tbody th, .sheet td {
  height: var(--row);
  vertical-align: bottom;
  border-right: 2px solid #d4d4d4;
  border-bottom: 2px solid #dadada;
}
.sheet tbody th { border-right-color: #b4b4b4; background: #f9f9f9; }
.sheet td { padding: 0 5px 0 7px; white-space: nowrap; overflow: hidden; font-size: 34px; }
.sheet td:last-child { border-right: 0; padding: 0; }
.sheet .heads th, .sheet .heads td { border-bottom-color: #a2a2a2; }
.sheet tbody tr:not(.heads) td:nth-child(2) { text-align: right; padding-right: 5px; font-size: 33px; }
.sheet td:has(div) { padding: 0; overflow: visible; }
.sheet .row-on th { color: #2f6b47; background: #efefef; border-right: 4px solid #2f6b47; }
.sheet .picked { border: 3px solid #2f6b47; border-right: 0; }

/* cells with a blanked-out middle */
.sheet td div { display: flex; align-items: flex-end; height: var(--row); margin: 0 0 -2px; }
.sheet td div span { overflow: hidden; padding-bottom: 2px; }
.sheet td div i { align-self: stretch; background: #fff; flex: none; }
.sheet td:nth-child(3) span:first-child { width: 26px; padding-left: 7px; }
.sheet td:nth-child(3) i { width: 185px; }
.sheet td:nth-child(4) span { width: 46px; padding-left: 7px; }
.sheet td:nth-child(4) i { width: 84px; }
.sheet td:nth-child(6) div { font-size: 33px; }
.sheet td:nth-child(6) span:first-child { width: 130px; padding-left: 70px; }
.sheet td:nth-child(6) i { width: 85px; }
.k1 { text-indent: -8px; }
.k2 { text-indent: -11px; }
.k3 { text-indent: -19px; }
.k4 { text-indent: -26px; }
.k5 { text-indent: -31px; }

/* sheet tabs */
.sheets { display: flex; align-items: center; height: 52px; padding-left: 31px; gap: 31px; background: #efefef; }
.sheet-tab {
  align-self: flex-start;
  width: 182px;
  height: 46px;
  border-radius: 0 0 6px 6px;
  background: #fff;
  box-shadow: 0 1px 2px rgba(0, 0, 0, .4);
  color: #4e9468;
  font-family: "Liberation Serif", "Noto Sans CJK TC", serif;
  font-size: 23px;
  font-weight: 300;
}
.add { width: 46px; height: 42px; border-right: 1px solid #ccc; }

/* status bar */
.status {
  display: flex;
  align-items: center;
  height: 46px;
  padding: 0 44px 0 48px;
  border-top: 2px solid #b2b2b2;
  background: linear-gradient(#e2e2e2, #d6d6d6);
  color: #555;
}
.ready { margin-right: auto; font-size: 23px; }
.view { width: 72px; height: 44px; display: flex; align-items: center; justify-content: center; }
.view-on { background: #a3a3a3; }
.zoom-out { margin-left: 14px; }
.zoom { width: 196px; height: 26px; margin: 0 16px; }
.zoom::-webkit-slider-runnable-track { height: 8px; border-radius: 4px; background: linear-gradient(90deg, #979797 96px, #d8d8d8 96px 101px, #979797 101px); }
.zoom::-webkit-slider-thumb { appearance: none; width: 23px; height: 23px; margin-top: -8px; border-radius: 50%; background: #fff; box-shadow: 0 1px 3px rgba(0, 0, 0, .4); }
.percent { width: 64px; margin-left: 33px; font-size: 23px; }

/* red annotations drawn over the window */
.notes { position: absolute; left: 0; top: 0; right: 0; bottom: 0; overflow: hidden; pointer-events: none; }
.arrows { position: absolute; left: 0; top: 0; fill: none; stroke: #f23c20; stroke-width: 12px; }
.note {
  position: absolute;
  margin: 0;
  color: #f23c20;
  white-space: nowrap;
  font: 700 44px/53px "Liberation Sans", "Noto Sans CJK SC", sans-serif;
}
.digit { top: 82px; font: 136px/160px Roboto, sans-serif; }
.d1 { left: 367px; }
.d2 { left: 1048px; }
.d3 { left: 1388px; }
.d4 { left: 1591px; }
.order { left: 1718px; top: 304px; font-size: 75px; line-height: 90px; }
.first-row { left: 2193px; top: 516px; }
.paid { left: 2071px; top: 904px; }
.one-sheet { left: 776px; top: 1733px; }
```
